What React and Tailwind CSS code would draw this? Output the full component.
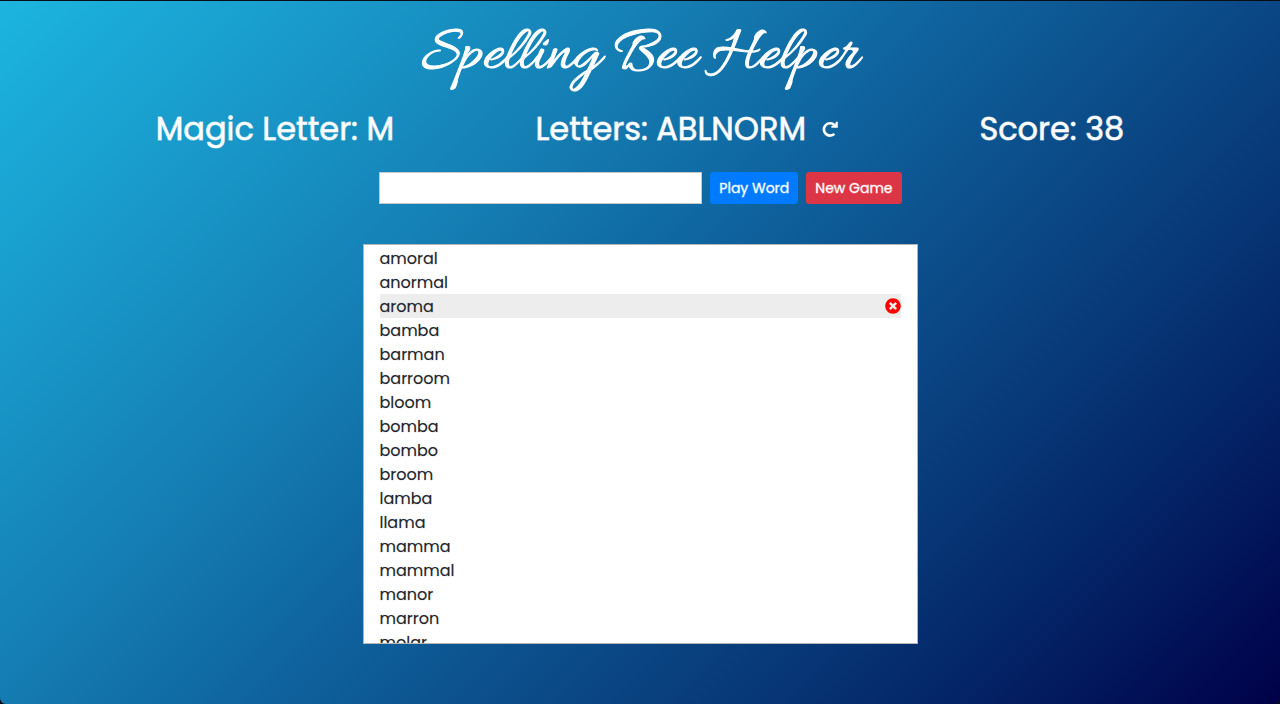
import { useState } from "react";
import { FaTimesCircle } from "react-icons/fa";

const WORDS = [
  "amoral", "anormal", "aroma", "bamba", "barman", "barroom", "bloom", "bomba", "bombo",
  "broom", "lamba", "llama", "mamma", "mammal", "manor", "marron", "molar",
];

export default function App() {
  const [word, setWord] = useState("");
  const [active, setActive] = useState("aroma");

  return (
    <div className="min-h-screen flex flex-col bg-[#0a0e14] pt-px font-[Poppins,Inter,sans-serif]">
      <main className="flex-1 rounded-b-md bg-[linear-gradient(135deg,#1cb5e0,#1580b5_33%,#0e609b_50%,#09407e_68%,#042769_82%,#000048)] px-4 pb-15">
        <div className="mx-auto max-w-[1110px]">
          <h1 className="pt-4 text-center text-[64px] leading-[78px] text-white [-webkit-text-stroke:1px_white] font-[Allura,'Liberation_Serif',cursive]">
            Spelling Bee Helper
          </h1>
          <div className="mt-[14px] flex items-center justify-around text-[32px] leading-[40px] text-white [-webkit-text-stroke:1px_#ffffffa8]">
            <h2>Magic Letter: M</h2>
            <div className="flex items-center gap-4">
              <h2>Letters: ABLNORM</h2>
              <button type="button" aria-label="Shuffle letters">
                <svg viewBox="0 0 16 16" className="size-4" fill="none" aria-hidden="true">
                  <path d="M12.4 12.9A6.2 6.2 0 1 1 12.4 4" stroke="currentColor" strokeWidth="2.7" />
                  <path d="M15.8 0.8v6H9.4V5l2.4-.8L13.8 2V.8z" fill="currentColor" />
                </svg>
              </button>
            </div>
            <h2>Score: 38</h2>
          </div>
          <div className="mx-auto mt-[23px] max-w-[555px]">
            <form className="flex gap-2 px-4" onSubmit={(e) => e.preventDefault()}>
              <input
                type="text"
                aria-label="Word"
                value={word}
                onChange={(e) => setWord(e.target.value)}
                className="h-8 min-w-0 flex-1 border border-[#c8c8c8] bg-white px-2 text-sm outline-none"
              />
              <button type="submit" className="h-8 rounded-[3px] bg-[#007bff] px-[9px] text-sm text-white [-webkit-text-stroke:1px_#ffffff60]">
                Play Word
              </button>
              <button type="button" className="h-8 rounded-[3px] bg-[#dc3545] px-[9px] text-sm text-white [-webkit-text-stroke:1px_#ffffff60]">
                New Game
              </button>
            </form>
            <ul className="mt-10 h-100 overflow-y-auto border border-[#b5b5b5] bg-white px-4 pt-px text-base text-[#212529] [-webkit-text-stroke:1px_#21252928] [scrollbar-width:none]">
              {WORDS.map((w) => (
                <li
                  key={w}
                  onMouseEnter={() => setActive(w)}
                  className={"flex h-6 items-center justify-between " + (w === active ? "bg-[#ededed]" : "")}
                >
                  <span className="pt-0.5">{w}</span>
                  {w === active && (
                    <button type="button" aria-label={"Remove " + w} className="text-[#ff0000]">
                      <FaTimesCircle />
                    </button>
                  )}
                </li>
              ))}
            </ul>
          </div>
        </div>
      </main>
    </div>
  );
}
